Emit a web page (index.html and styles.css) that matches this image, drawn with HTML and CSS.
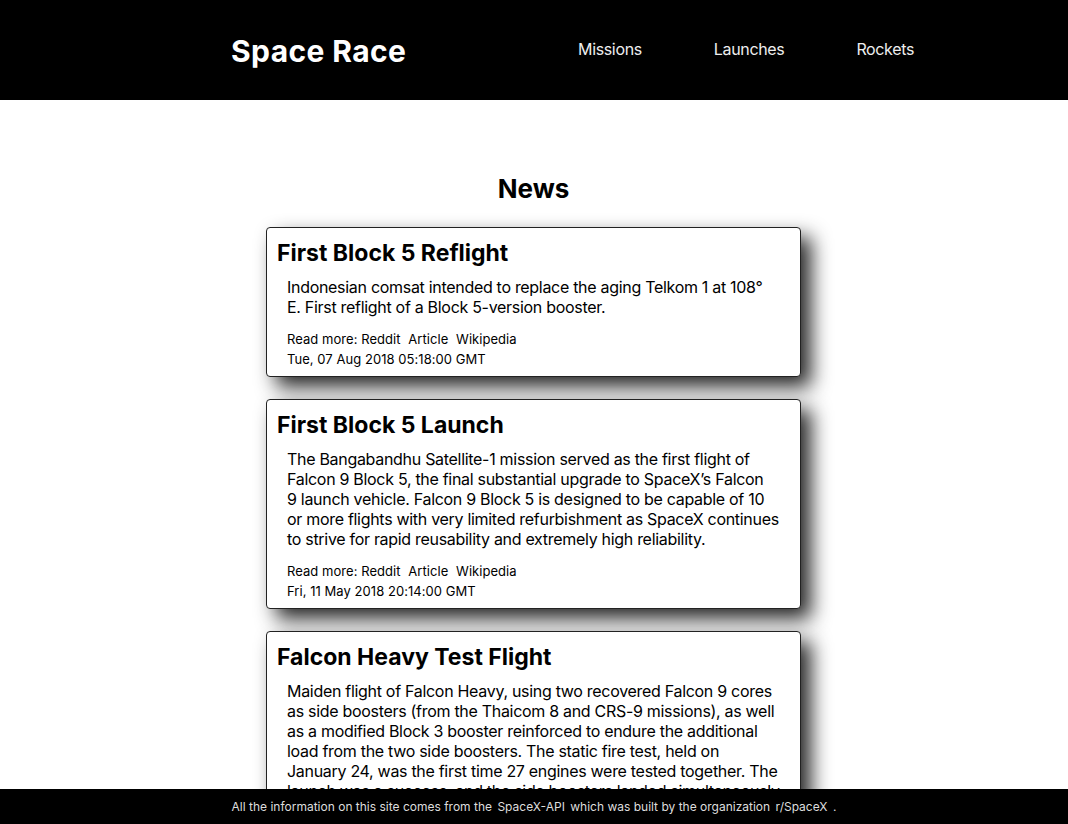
FILE: index.html
```html
<!DOCTYPE html>
<html lang="en">
<head>
<meta charset="utf-8">
<title>Space Race</title>
<link rel="stylesheet" href="styles.css">
</head>
<body>
<header class="site-header">
  <div class="brand">Space Race</div>
  <nav class="nav">
    <a href="#">Missions</a>
    <a href="#">Launches</a>
    <a href="#">Rockets</a>
  </nav>
</header>
<main class="main">
  <h1 class="page-title">News</h1>
  <article class="card">
    <h2 class="card-title">First Block 5 Reflight</h2>
    <p class="card-text">Indonesian comsat intended to replace the aging Telkom 1 at 108° E. First reflight of a Block 5-version booster.</p>
    <div class="card-meta">Read more: <a href="#">Reddit</a> <a href="#">Article</a> <a href="#">Wikipedia</a></div>
    <div class="card-meta">Tue, 07 Aug 2018 05:18:00 GMT</div>
  </article>
  <article class="card">
    <h2 class="card-title">First Block 5 Launch</h2>
    <p class="card-text">The Bangabandhu Satellite-1 mission served as the first flight of Falcon 9 Block 5, the final substantial upgrade to SpaceX’s Falcon<br>9 launch vehicle. Falcon 9 Block 5 is designed to be capable of 10 or more flights with very limited refurbishment as SpaceX continues to strive for rapid reusability and extremely high reliability.</p>
    <div class="card-meta">Read more: <a href="#">Reddit</a> <a href="#">Article</a> <a href="#">Wikipedia</a></div>
    <div class="card-meta">Fri, 11 May 2018 20:14:00 GMT</div>
  </article>
  <article class="card">
    <h2 class="card-title">Falcon Heavy Test Flight</h2>
    <p class="card-text">Maiden flight of Falcon Heavy, using two recovered Falcon 9 cores as side boosters (from the Thaicom 8 and CRS-9 missions), as well as a modified Block 3 booster reinforced to endure the additional load from the two side boosters. The static fire test, held on January 24, was the first time 27 engines were tested together. The launch was a success, and the side boosters landed simultaneously at adjacent ground pads. The center core failed to land on the drone ship.</p>
    <div class="card-meta">Read more: <a href="#">Reddit</a> <a href="#">Article</a> <a href="#">Wikipedia</a></div>
    <div class="card-meta">Tue, 06 Feb 2018 20:45:00 GMT</div>
  </article>
</main>
<footer class="site-footer">All the information on this site comes from the <a href="#">SpaceX-API</a> which was built by the organization <a href="#">r/SpaceX</a> .</footer>
</body>
</html>
```

FILE: styles.css
```css
* { box-sizing: border-box; }
html, body { margin: 0; padding: 0; }
body {
  font-family: Inter, "Noto Sans", "Liberation Sans", sans-serif;
  color: #000;
  background: #fff;
}
.site-header {
  height: 100px;
  background: #000;
  color: #fff;
  display: flex;
  align-items: center;
  justify-content: space-between;
  padding: 0 154px 0 231px;
}
.brand {
  font-size: 30px;
  font-weight: 700;
  letter-spacing: 0.4px;
  padding-top: 1px;
}
.nav {
  display: flex;
  gap: 72px;
  padding-bottom: 3px;
}
.nav a {
  color: #eee;
  text-decoration: none;
  font-size: 16px;
  letter-spacing: -0.35px;
}
.main {
  padding: 73px 1px 60px 0;
  display: flex;
  flex-direction: column;
  align-items: center;
}
.page-title {
  font-size: 26px;
  font-weight: 700;
  margin: 0 0 22px;
  line-height: 32px;
}
.card {
  width: 535px;
  border: 1px solid #222;
  border-radius: 4px;
  padding: 11px 10px 7px;
  margin-bottom: 22px;
  box-shadow: 10px 10px 20px rgba(0, 0, 0, 0.85);
  background: #fff;
}
.card-title {
  margin: 0 0 10px;
  font-size: 23px;
  font-weight: 700;
  line-height: 28px;
}
.card-text {
  margin: 0 0 12px;
  padding: 0 10px;
  font-size: 16px;
  line-height: 20px;
  letter-spacing: -0.3px;
}
.card-meta {
  padding-left: 10px;
  font-size: 13px;
  line-height: 20px;
  letter-spacing: 0.05px;
}
.card-meta a {
  color: #000;
  text-decoration: none;
  margin-left: 4px;
}
.card-meta a:first-child { margin-left: 0; }
.site-footer {
  position: fixed;
  left: 0;
  right: 0;
  bottom: 0;
  height: 35px;
  line-height: 35px;
  background: #000;
  color: #ddd;
  font-size: 12px;
  text-align: center;
}
.site-footer a {
  color: #ddd;
  text-decoration: none;
  margin: 0 2px;
}
```
